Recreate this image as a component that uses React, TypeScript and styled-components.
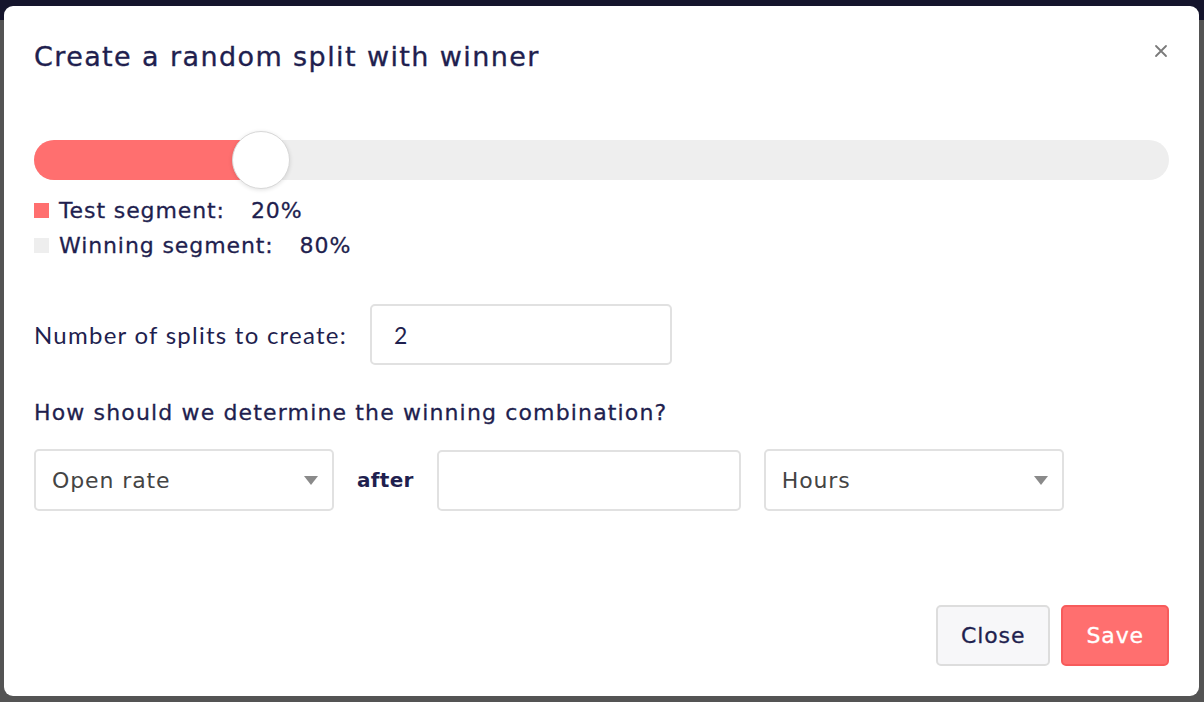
import styled, { createGlobalStyle } from "styled-components";

const GlobalStyle = createGlobalStyle`
  html, body {
    margin: 0;
    padding: 0;
  }
  body {
    background: linear-gradient(#15152c 0, #15152c 20px, #545454 20px);
    font-family: "DejaVu Sans", "Open Sans", sans-serif;
    color: #1f1f4f;
  }
`;

const CORAL = "#ff6f6f";

const Backdrop = styled.div`
  width: 1204px;
  height: 702px;
  padding: 6px 5px 6px 4px;
  box-sizing: border-box;
  display: flex;
`;

const Modal = styled.div`
  flex: 1;
  background: #fff;
  border-radius: 9px;
  display: flex;
  flex-direction: column;
  padding: 0 30px 30px 30px;
  box-sizing: border-box;
`;

const Header = styled.div`
  display: flex;
  justify-content: space-between;
  align-items: flex-start;
  padding-top: 35px;
`;

const Title = styled.h2`
  margin: 0;
  font-size: 27px;
  line-height: 32px;
  font-weight: 400;
  letter-spacing: 1.4px;
  -webkit-text-stroke: 0.35px currentColor;
  color: #1f1f4f;
`;

const CloseX = styled.button`
  border: 0;
  background: none;
  padding: 0;
  margin: 3px 1px 0 0;
  width: 14px;
  height: 14px;
  cursor: pointer;
  display: flex;
`;

const Body = styled.div`
  flex: 1;
  display: flex;
  flex-direction: column;
`;

const Track = styled.div`
  position: relative;
  margin-top: 67px;
  height: 40px;
  border-radius: 20px;
  background: #eeeeee;
`;

const Fill = styled.div`
  height: 100%;
  border-radius: 20px 0 0 20px;
  background: ${CORAL};
`;

const Thumb = styled.div`
  position: absolute;
  top: 50%;
  width: 56px;
  height: 56px;
  border-radius: 50%;
  background: #fff;
  border: 1px solid #d8d8d8;
  box-shadow: 0 1px 4px rgba(0, 0, 0, 0.12);
  transform: translate(-50%, -50%);
`;

const Legend = styled.div`
  margin-top: 13px;
  display: flex;
  flex-direction: column;
`;

const LegendRow = styled.div`
  display: flex;
  align-items: center;
  height: 35px;
  font-size: 22px;
  letter-spacing: 0.9px;
  -webkit-text-stroke: 0.3px currentColor;
`;

const Swatch = styled.span<{ $color: string }>`
  width: 15px;
  height: 15px;
  background: ${(p) => p.$color};
  margin-right: 10px;
`;

const LegendValue = styled.span`
  margin-left: 26px;
`;

const FieldRow = styled.div`
  display: flex;
  align-items: center;
  margin-top: 41px;
  gap: 23px;
`;

const LatoLabel = styled.label`
  font-family: Lato, "Open Sans", sans-serif;
  font-size: 24px;
  letter-spacing: 1.25px;
  color: #1f1f4f;
`;

const TextInput = styled.div<{ $width: number }>`
  width: ${(p) => p.$width}px;
  height: 61px;
  box-sizing: border-box;
  border: 2px solid #e1e1e1;
  border-radius: 5px;
  display: flex;
  align-items: center;
  padding: 0 22px;
  font-family: Lato, "Open Sans", sans-serif;
  font-size: 23px;
  color: #1f1f4f;
`;

const Question = styled.div`
  margin-top: 36px;
  font-size: 22px;
  line-height: 24px;
  letter-spacing: 1.15px;
  -webkit-text-stroke: 0.3px currentColor;
`;

const ComboRow = styled.div`
  display: flex;
  align-items: center;
  margin-top: 24px;
  gap: 23px;
`;

const SelectBox = styled.div`
  width: 300px;
  height: 62px;
  box-sizing: border-box;
  border: 2px solid #e1e1e1;
  border-radius: 5px;
  display: flex;
  align-items: center;
  justify-content: space-between;
  padding: 0 14px 0 16px;
  font-size: 22px;
  letter-spacing: 0.9px;
  color: #444;
`;

const Caret = styled.span`
  width: 0;
  height: 0;
  border-left: 7px solid transparent;
  border-right: 7px solid transparent;
  border-top: 9px solid #8a8a8a;
`;

const After = styled.span`
  font-size: 20px;
  font-weight: 700;
  letter-spacing: 0.3px;
  color: #1f1f4f;
`;

const Footer = styled.div`
  display: flex;
  justify-content: flex-end;
  gap: 11px;
`;

const Button = styled.button<{ $primary?: boolean }>`
  height: 61px;
  box-sizing: border-box;
  padding: 0 23px;
  border-radius: 5px;
  font-family: "DejaVu Sans", "Open Sans", sans-serif;
  font-size: 22px;
  letter-spacing: 0.9px;
  -webkit-text-stroke: 0.3px currentColor;
  cursor: pointer;
  border: 2px solid ${(p) => (p.$primary ? "#f75b5b" : "#dddddd")};
  background: ${(p) => (p.$primary ? CORAL : "#f7f7f9")};
  color: ${(p) => (p.$primary ? "#fff" : "#1f1f4f")};
`;

export default function App() {
  const testShare = 20;

  return (
    <>
      <GlobalStyle />
      <Backdrop>
        <Modal>
          <Header>
            <Title>Create a random split with winner</Title>
            <CloseX aria-label="Close">
              <svg width="14" height="14" viewBox="0 0 14 14">
                <path
                  d="M2 2 L12 12 M12 2 L2 12"
                  stroke="#7a7a7a"
                  strokeWidth="1.8"
                  strokeLinecap="round"
                />
              </svg>
            </CloseX>
          </Header>
          <Body>
            <Track>
              <Fill style={{ width: `${testShare}%` }} />
              <Thumb style={{ left: `${testShare}%` }} />
            </Track>
            <Legend>
              <LegendRow>
                <Swatch $color={CORAL} />
                Test segment:
                <LegendValue>{testShare}%</LegendValue>
              </LegendRow>
              <LegendRow>
                <Swatch $color="#eeeeee" />
                Winning segment:
                <LegendValue>{100 - testShare}%</LegendValue>
              </LegendRow>
            </Legend>
            <FieldRow>
              <LatoLabel>Number of splits to create:</LatoLabel>
              <TextInput $width={302}>2</TextInput>
            </FieldRow>
            <Question>How should we determine the winning combination?</Question>
            <ComboRow>
              <SelectBox>
                Open rate
                <Caret />
              </SelectBox>
              <After>after</After>
              <TextInput $width={304} />
              <SelectBox>
                Hours
                <Caret />
              </SelectBox>
            </ComboRow>
          </Body>
          <Footer>
            <Button>Close</Button>
            <Button $primary>Save</Button>
          </Footer>
        </Modal>
      </Backdrop>
    </>
  );
}
